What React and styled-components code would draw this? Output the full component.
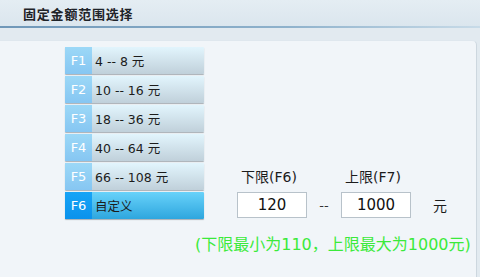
import styled, { createGlobalStyle } from "styled-components";

const Global = createGlobalStyle`
  html, body { margin: 0; padding: 0; }
  body {
    width: 480px;
    height: 277px;
    overflow: hidden;
    background: #e2eaf0;
    font-family: "DejaVu Sans", "Noto Sans CJK SC", sans-serif;
  }
`;

const Screen = styled.div`
  width: 480px;
  height: 277px;
  display: flex;
  flex-direction: column;
`;

const Header = styled.div`
  height: 26px;
  display: flex;
  align-items: center;
  padding-left: 23px;
  background: linear-gradient(#e4edf3, #dbe6ee);
  border-bottom: 2px solid;
  border-image: linear-gradient(90deg, #6f97b8, #8fb2cc 60%, #c8dbe8) 1;
  font-family: "Noto Sans CJK SC", sans-serif;
  font-weight: bold;
  font-size: 13px;
  color: #1e2328;
  letter-spacing: 0.8px;
`;

const Panel = styled.div`
  flex: 1;
  margin: 12px 3px 0 0;
  background: #f1f5f9;
  border-top: 1px solid #dfe7ee;
  border-right: 1px solid #cdd7df;
  border-top-right-radius: 5px;
  display: flex;
  padding: 6px 0 0 65px;
`;

const List = styled.div`
  display: flex;
  flex-direction: column;
  flex-shrink: 0;
  gap: 2px;
  width: 139px;
`;

const Row = styled.div`
  height: 27px;
  display: flex;
  box-shadow: 0 1px 1px rgba(80, 90, 100, 0.45);
  border-radius: 1px;
  background: ${p => p.$active
    ? "linear-gradient(#68d2fa, #2ea6de)"
    : "linear-gradient(#e2f5fd, #c0d0da)"};
`;

const Key = styled.div`
  width: 27px;
  display: flex;
  align-items: center;
  justify-content: center;
  color: #fff;
  font-size: 13px;
  background: ${p => p.$active
    ? "linear-gradient(#18a4f6, #0a92ec)"
    : "linear-gradient(#9cd8f7, #86c6f2)"};
`;

const Label = styled.div`
  display: flex;
  align-items: center;
  padding-left: 3px;
  font-size: 12.5px;
  color: #1c1c1c;
`;

const Right = styled.div`
  flex: 1;
  min-width: 0;
  display: flex;
  flex-direction: column;
  padding-left: 33px;
  padding-top: 120px;
`;

const Fields = styled.div`
  display: flex;
  align-items: flex-end;
`;

const Field = styled.div`
  display: flex;
  flex-direction: column;
  width: 70px;
`;

const Caption = styled.div`
  font-size: 14px;
  color: #1c1c1c;
  padding-left: 4px;
  height: 25px;
  line-height: 20px;
  white-space: nowrap;
`;

const Input = styled.div`
  height: 26px;
  box-sizing: border-box;
  border: 1px solid #b8c2ca;
  background: #fff;
  display: flex;
  align-items: center;
  justify-content: center;
  font-size: 15px;
  color: #111;
`;

const Dash = styled.div`
  width: 34px;
  height: 26px;
  display: flex;
  align-items: center;
  justify-content: center;
  font-size: 13px;
  color: #333;
`;

const Unit = styled.div`
  height: 26px;
  display: flex;
  align-items: center;
  padding-left: 22px;
  font-size: 14px;
  color: #1c1c1c;
`;

const Note = styled.div`
  margin-top: 13px;
  margin-left: -42px;
  font-size: 16px;
  color: #3bea3b;
  white-space: nowrap;
`;

const items = [
  ["F1", "4 -- 8 元"],
  ["F2", "10 -- 16 元"],
  ["F3", "18 -- 36 元"],
  ["F4", "40 -- 64 元"],
  ["F5", "66 -- 108 元"],
  ["F6", "自定义"],
];

export default function App() {
  return (
    <Screen>
      <Global />
      <Header>固定金额范围选择</Header>
      <Panel>
        <List>
          {items.map(([k, t], i) => (
            <Row key={k} $active={i === 5}>
              <Key $active={i === 5}>{k}</Key>
              <Label>{t}</Label>
            </Row>
          ))}
        </List>
        <Right>
          <Fields>
            <Field>
              <Caption>下限(F6)</Caption>
              <Input>120</Input>
            </Field>
            <Dash>--</Dash>
            <Field>
              <Caption>上限(F7)</Caption>
              <Input>1000</Input>
            </Field>
            <Unit>元</Unit>
          </Fields>
          <Note>(下限最小为110，上限最大为1000元)</Note>
        </Right>
      </Panel>
    </Screen>
  );
}
